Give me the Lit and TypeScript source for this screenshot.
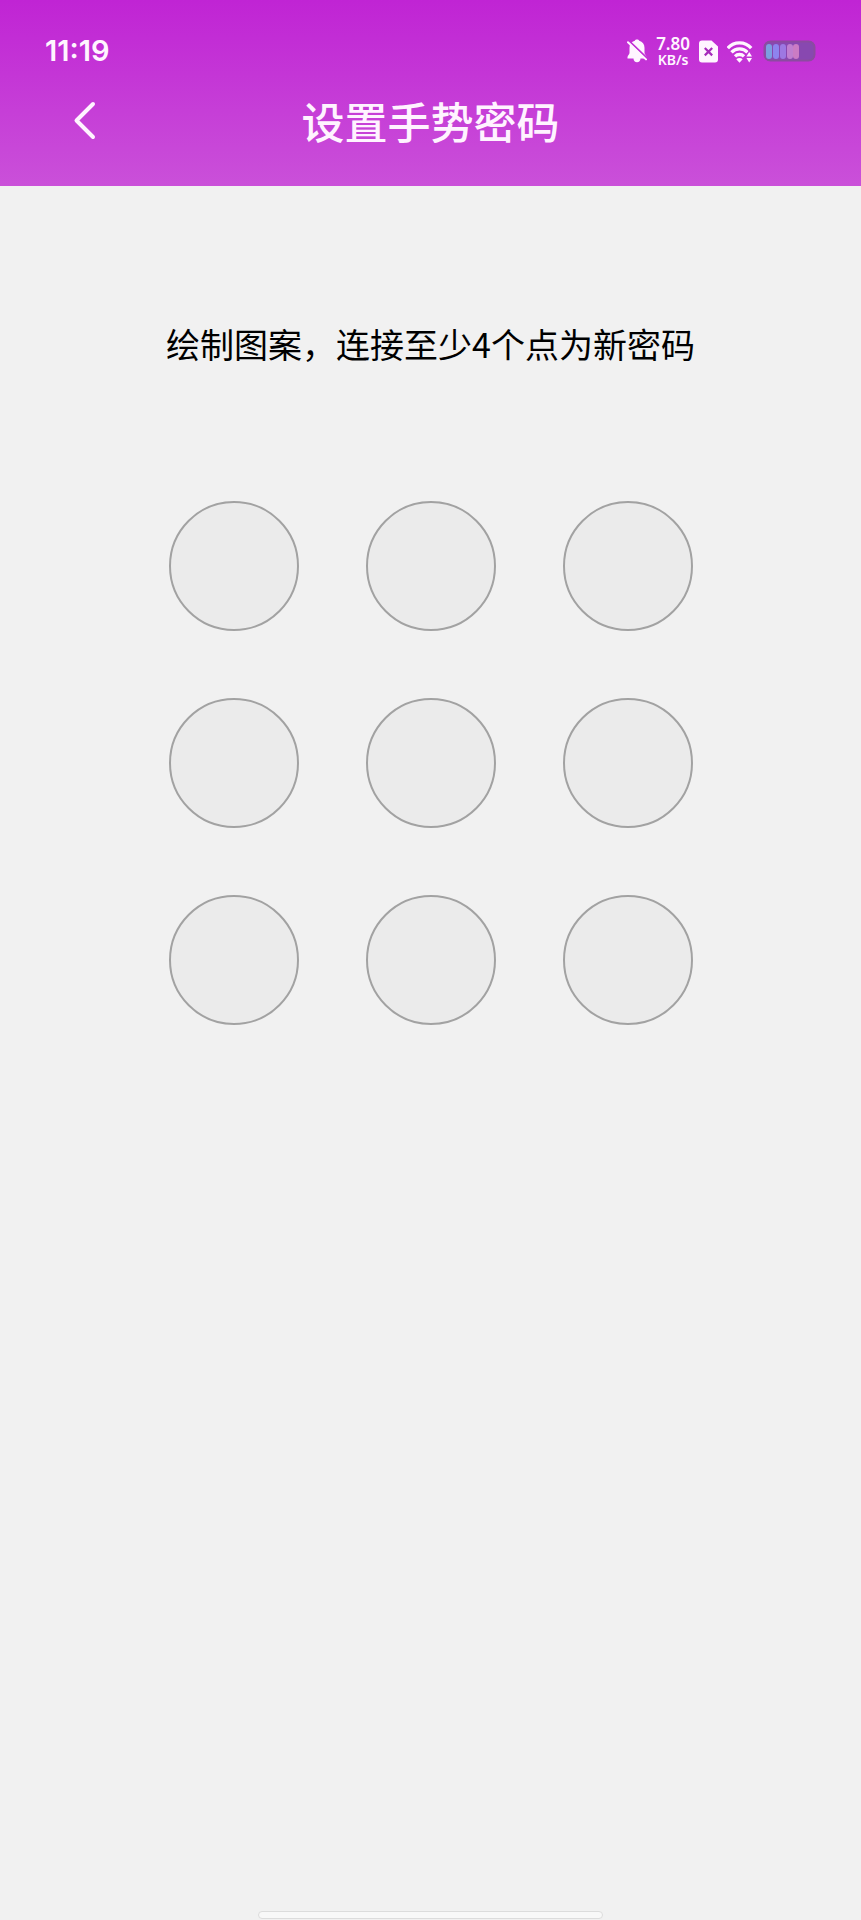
import { LitElement, html, css } from "lit";
import { customElement } from "lit/decorators.js";

const DOTS = [1, 2, 3, 4, 5, 6, 7, 8, 9];

@customElement("status-bar")
class StatusBar extends LitElement {
  static styles = css`
    :host {
      display: flex;
      align-items: center;
      justify-content: space-between;
      height: 32px;
      padding: 35px 45px 0;
      color: #fff5ff;
    }
    .time {
      font: 600 29px/32px Inter, sans-serif;
    }
    .icons {
      display: flex;
      align-items: center;
      gap: 9px;
    }
    .speed {
      display: flex;
      flex-direction: column;
      align-items: center;
      padding-top: 2px;
      font-family: "Noto Sans", sans-serif;
      font-weight: 600;
      line-height: 16px;
    }
    .rate {
      font-size: 17px;
    }
    .unit {
      font-size: 14px;
    }
    svg {
      display: block;
    }
  `;

  render() {
    return html`
      <span class="time">11:19</span>
      <div class="icons">
        <svg width="20" height="24" viewBox="0 0 20 24" aria-hidden="true">
          <path fill="currentColor" d="M10 .5c1.100 0 1.900.5 2.200 1.200C15.500 2.600 17.500 5.200 17.500 8.700v5.300c0 1.600 2 2.500 2 4.300v1.200H.5v-1.200C.5 16.500 2.500 15.600 2.500 14V8.700c0-3.500 2-6.100 5.300-7C8.100 1 8.900.5 10 .5zM6.500 19.500h7c0 2.400-1.500 3.700-3.500 3.700s-3.500-1.300-3.500-3.700z"/>
          <path stroke="#c12fd5" stroke-width="2" d="M1.500 1.500l20 19"/>
          <path stroke="currentColor" stroke-width="2" stroke-linecap="round" d="M1 3.200l18 17.200"/>
        </svg>
        <div class="speed"><span class="rate">7.80</span><span class="unit">KB/s</span></div>
        <svg width="19" height="23" viewBox="0 0 19 23" aria-hidden="true">
          <path fill="currentColor" d="M3 .5h9.500L19 6.500V19.500a3 3 0 0 1-3 3H3a3 3 0 0 1-3-3v-16a3 3 0 0 1 3-3z"/>
          <path stroke="#a62bbb" stroke-width="2.200" d="M5.800 8l7.400 7.400M13.200 8l-7.400 7.400"/>
        </svg>
        <svg width="27" height="23" viewBox="0 0 27 23" aria-hidden="true">
          <g fill="none" stroke="currentColor" stroke-width="3.300">
            <path d="M.8 8.200a15.500 15.500 0 0 1 23.400 0"/>
            <path d="M4.500 12.400a10.800 10.800 0 0 1 16 0"/>
            <path d="M8 16.400a6.300 6.300 0 0 1 9 0"/>
          </g>
          <path fill="currentColor" d="M9.300 19.200c1.800-1.500 4.600-1.500 6.400 0l-3.200 3.600z"/>
          <path fill="#c334d6" d="M18.200 18L22.200 9.500 27 14v9h-8.800z"/>
          <path fill="currentColor" d="M19.400 16.500l2.800-4.500 2.800 4.500zM19.400 18h5.600l-2.800 4.500z"/>
        </svg>
        <svg width="53" height="22" viewBox="0 0 53 22" aria-hidden="true">
          <rect x="1" y="1" width="51" height="20" rx="6" fill="#8848b0"/>
          <rect x="1.500" y="1.500" width="50" height="19" rx="6" fill="none" stroke="#8b4ba0" stroke-width="2"/>
          <rect x="3" y="4" width="6" height="15" rx="3" fill="#7c9ee0"/>
          <rect x="10" y="4" width="6" height="15" rx="3" fill="#8e83ee"/>
          <rect x="17" y="4" width="6" height="15" rx="3" fill="#9d78e2"/>
          <rect x="24" y="4" width="6" height="15" rx="3" fill="#c07fd0"/>
          <rect x="30" y="4" width="6" height="15" rx="3" fill="#cb7cc4"/>
        </svg>
      </div>
    `;
  }
}

@customElement("pattern-lock")
class PatternLock extends LitElement {
  static styles = css`
    :host {
      display: grid;
      grid-template-columns: repeat(3, 130px);
      gap: 67px;
      justify-content: center;
    }
    .dot {
      box-sizing: border-box;
      height: 130px;
      padding: 0;
      border: 2px solid #a2a2a2;
      border-radius: 50%;
      background: #ebebeb;
    }
  `;

  render() {
    return DOTS.map(
      (n) => html`<button class="dot" type="button" aria-label=${n}></button>`
    );
  }
}

@customElement("app-root")
class AppRoot extends LitElement {
  static styles = css`
    :host {
      display: flex;
      flex-direction: column;
      min-height: 100vh;
      background: #f1f1f1;
      font-family: "Noto Sans CJK SC", sans-serif;
    }
    .header {
      background: linear-gradient(#c024d4, #ca50d9);
      color: #fff3ff;
    }
    .nav {
      display: grid;
      grid-template-columns: 48px 1fr 48px;
      align-items: center;
      padding: 21px 61px 34px;
    }
    .back {
      display: grid;
      place-items: center;
      width: 48px;
      height: 64px;
      padding: 0;
      border: 0;
      background: none;
      color: inherit;
    }
    .title {
      margin: 0;
      text-align: center;
      font-size: 43px;
      font-weight: 500;
      line-height: 64px;
    }
    .main {
      flex: 1;
      padding: 134px 24px;
    }
    .hint {
      margin: 0 0 133px;
      text-align: center;
      font-size: 34px;
      line-height: 48px;
      color: #000;
    }
    .home {
      box-sizing: border-box;
      align-self: center;
      width: 40%;
      height: 8px;
      margin-bottom: 1px;
      border: 1px solid #dcdcdc;
      border-radius: 4px;
      background: #f8f8f8;
    }
  `;

  render() {
    return html`
      <header class="header">
        <status-bar></status-bar>
        <div class="nav">
          <button class="back" type="button" aria-label="返回">
            <svg width="24" height="40" viewBox="0 0 24 40" aria-hidden="true">
              <path d="M20 4L3.500 20.500 20 37" fill="none" stroke="currentColor" stroke-width="4" stroke-linecap="round" stroke-linejoin="round"/>
            </svg>
          </button>
          <h1 class="title">设置手势密码</h1>
        </div>
      </header>
      <main class="main">
        <p class="hint">绘制图案，连接至少4个点为新密码</p>
        <pattern-lock></pattern-lock>
      </main>
      <div class="home"></div>
    `;
  }
}
